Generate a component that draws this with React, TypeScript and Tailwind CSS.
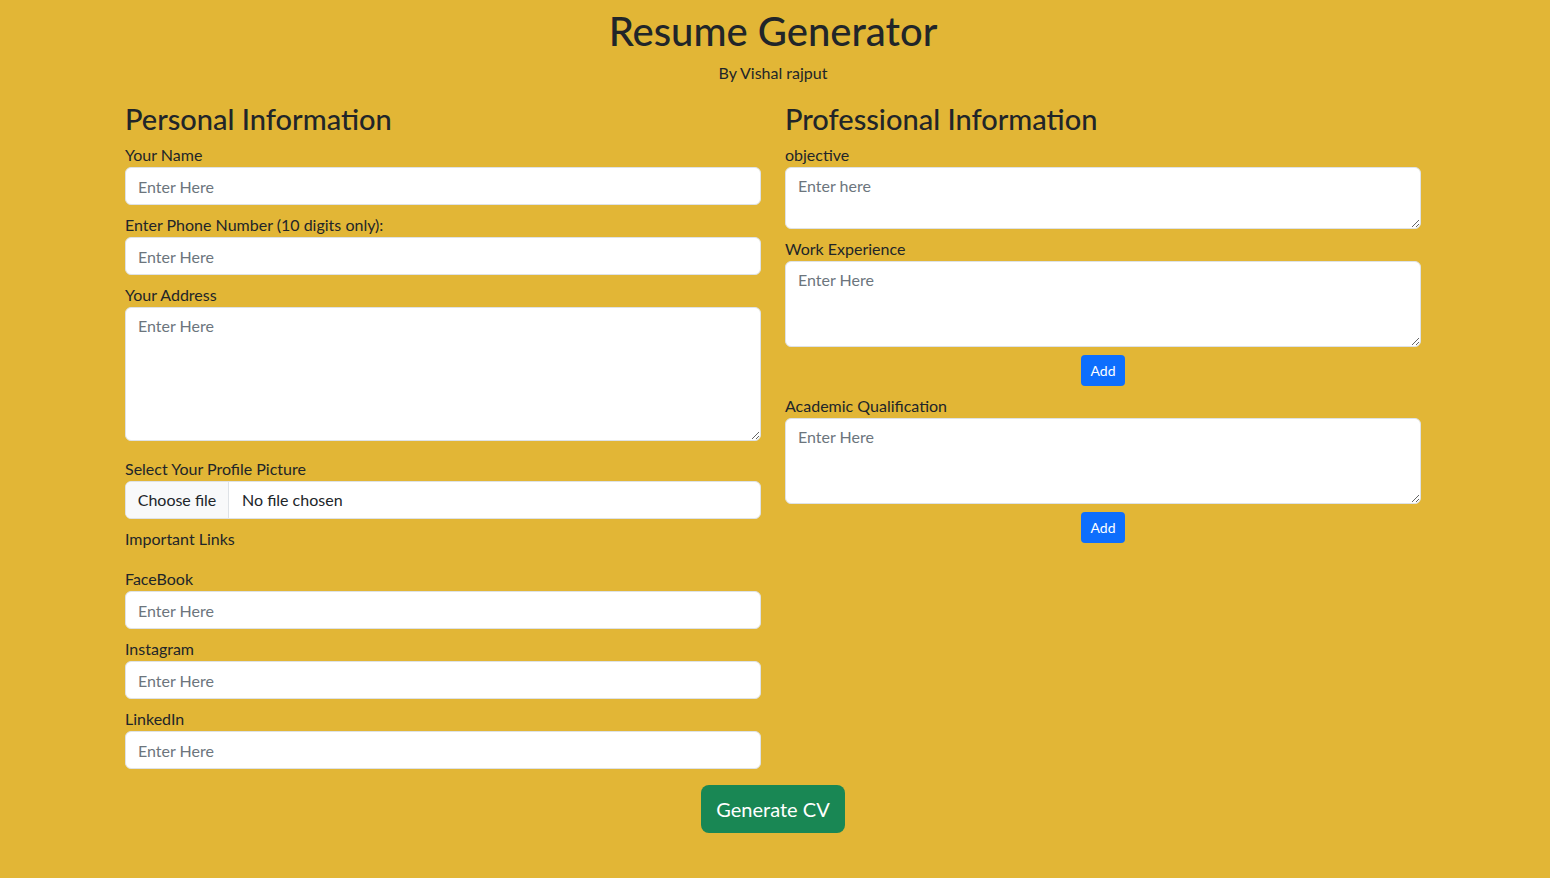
import React from "react";

const inputClass =
  "block w-full rounded-md border border-[#dee2e6] bg-white px-3 py-1.5 text-base leading-6 text-[#212529] placeholder:text-[#6c757d] outline-none";

function Field({ label, rows }: { label: string; rows?: number }) {
  return (
    <div className="mb-2">
      <label className="block text-base leading-6">{label}</label>
      {rows ? (
        <textarea rows={rows} placeholder="Enter Here" className={inputClass} />
      ) : (
        <input type="text" placeholder="Enter Here" className={`${inputClass} h-[38px]`} />
      )}
    </div>
  );
}

function AddButton() {
  return (
    <div className="mb-2 flex justify-center">
      <button className="h-[31px] w-[44px] rounded-[4px] bg-[#0d6efd] text-sm leading-[21px] text-white">
        Add
      </button>
    </div>
  );
}

export default function App() {
  return (
    <div
      className="min-h-screen bg-[#e2b636] pr-1 text-[#212529]"
      style={{ fontFamily: "Lato, 'Noto Sans', sans-serif" }}
    >
      <div className="mx-auto w-[1296px] pt-[7px]">
        {/* Header */}
        <h1 className="text-center text-[40px] font-medium leading-[48px]">Resume Generator</h1>
        <p className="mt-1.5 text-center text-base leading-6">By Vishal rajput</p>

        <div className="mt-[15px] grid grid-cols-2 gap-x-6">
          {/* Personal Information */}
          <div>
            <h2 className="mb-[5px] text-[29px] font-medium leading-[38px]">Personal Information</h2>
            <Field label="Your Name" />
            <Field label="Enter Phone Number (10 digits only):" />
            <div className="mb-4">
              <label className="block text-base leading-6">Your Address</label>
              <textarea rows={5} placeholder="Enter Here" className={inputClass} />
            </div>
            <div className="mb-2">
              <span className="block text-base leading-6">Select Your Profile Picture</span>
              <label className="flex h-[38px] w-full cursor-pointer items-center overflow-hidden rounded-md border border-[#dee2e6] bg-white text-base leading-6">
                <input type="file" className="hidden" />
                <span className="flex h-full w-[103px] items-center justify-center border-r border-[#dee2e6] bg-[#f8f9fa]">
                  Choose file
                </span>
                <span className="ml-[13px]">No file chosen</span>
              </label>
            </div>
            <p className="mb-4 text-base leading-6">Important Links</p>
            <Field label="FaceBook" />
            <Field label="Instagram" />
            <Field label="LinkedIn" />
          </div>

          {/* Professional Information */}
          <div>
            <h2 className="mb-[5px] text-[29px] font-medium leading-[38px]">Professional Information</h2>
            <div className="mb-2">
              <label className="block text-base leading-6">objective</label>
              <textarea rows={2} placeholder="Enter here" className={inputClass} />
            </div>
            <Field label="Work Experience" rows={3} />
            <AddButton />
            <Field label="Academic Qualification" rows={3} />
            <AddButton />
          </div>
        </div>

        <div className="mt-2 flex justify-center">
          <button className="h-12 w-[144px] rounded-lg bg-[#198754] text-xl leading-[30px] text-white">
            Generate CV
          </button>
        </div>
      </div>
    </div>
  );
}
